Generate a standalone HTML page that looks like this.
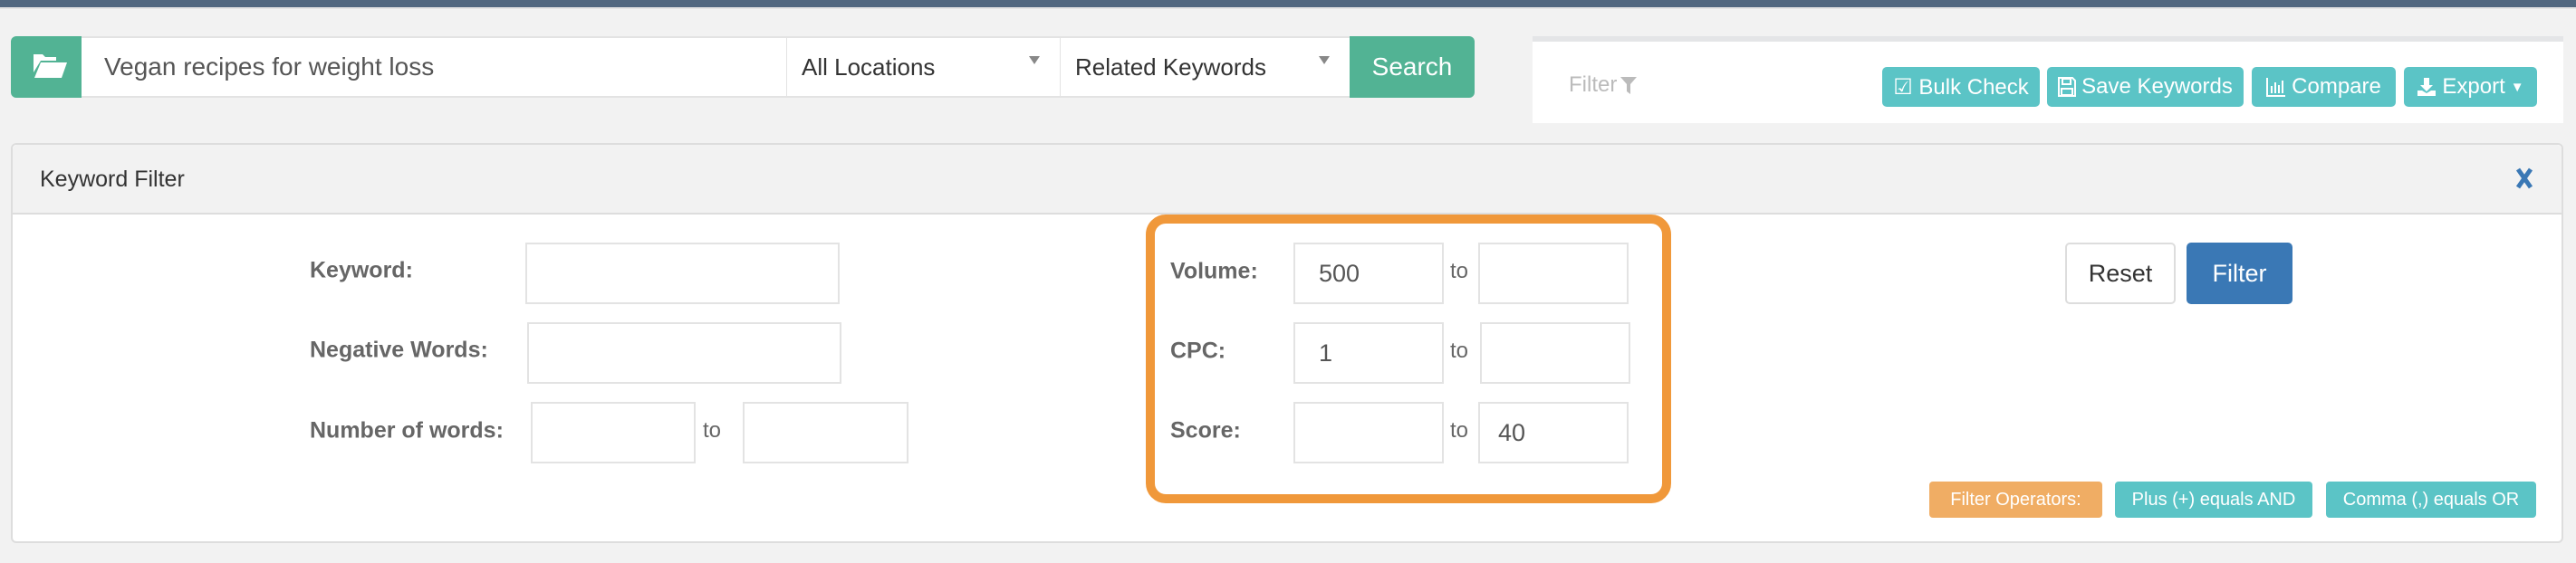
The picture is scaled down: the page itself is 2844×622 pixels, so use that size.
<!DOCTYPE html>
<html><head><meta charset="utf-8"><style>
*{box-sizing:border-box;margin:0;padding:0}
body{width:2844px;height:622px;background:#f2f2f2;font-family:"Liberation Sans",sans-serif;position:relative;overflow:hidden;color:#555}
.a{position:absolute}
.inp{position:absolute;background:#fff;border:2px solid #e3e3e3;font-size:27px;color:#555;padding-left:26px;display:flex;align-items:center}
.lbl{position:absolute;font-weight:bold;font-size:25px;color:#666;transform:translateY(-50%)}
.to{position:absolute;font-size:24px;color:#666;transform:translateY(-50%)}
.tb{position:absolute;top:74px;height:44px;background:#5bc4c6;color:#fff;border-radius:5px;font-size:24px;display:flex;align-items:center;justify-content:center;gap:6px}
.op{position:absolute;top:532px;height:40px;color:#fff;border-radius:4px;font-size:20px;display:flex;align-items:center;justify-content:center}
</style></head><body>
<div class="a" style="left:0;top:0;width:2844px;height:8px;background:#526880"></div>
<div class="a" style="left:0;top:8px;width:2844px;height:2px;background:#e4e4e4"></div>

<div class="a" style="left:12px;top:40px;width:80px;height:68px;background:#52b394;border-radius:6px 0 0 6px"></div>
<svg class="a" style="left:36px;top:58px" width="38" height="30" viewBox="0 0 38 30"><path d="M1 2h10l3 3h12v4H9L1 22z" fill="#fff"/><path d="M9 11h29l-6 17H2z" fill="#fff"/></svg>
<div class="inp" style="left:90px;top:40px;width:780px;height:68px;border-width:2px 0 2px 0;padding-left:25px;font-size:28px">Vegan recipes for weight loss</div>
<div class="inp" style="left:868px;top:40px;width:303px;height:68px;border-width:2px 1px 2px 1px;padding-left:16px;font-size:26px;color:#333">All Locations</div>
<div class="a" style="left:1136px;top:62px;border:6px solid transparent;border-top:9px solid #888;border-bottom:0"></div>
<div class="inp" style="left:1170px;top:40px;width:322px;height:68px;border-width:2px 0 2px 1px;padding-left:16px;font-size:26px;color:#333">Related Keywords</div>
<div class="a" style="left:1456px;top:62px;border:6px solid transparent;border-top:9px solid #888;border-bottom:0"></div>
<div class="a" style="left:1490px;top:40px;width:138px;height:68px;background:#52b394;border-radius:0 6px 6px 0;color:#fff;font-size:28px;display:flex;align-items:center;justify-content:center">Search</div>

<div class="a" style="left:1692px;top:40px;width:1138px;height:96px;background:#fff;border-top:6px solid #e4e5e7"></div>
<div class="a" style="left:1732px;top:80px;font-size:24px;color:#bbb;display:flex;align-items:center;gap:4px">Filter <svg width="18" height="22" viewBox="0 0 18 22"><path d="M0 2h18l-7 8v11l-4-3v-8z" fill="#bbb"/></svg></div>
<div class="tb" style="left:2078px;width:174px">&#9745; Bulk Check</div>
<div class="tb" style="left:2260px;width:217px"><svg width="20" height="22" viewBox="0 0 20 22"><path d="M1 1h15l3 3v17H1z" fill="none" stroke="#fff" stroke-width="2"/><path d="M5 2h9v6H5zM4 13h12v7H4z" fill="none" stroke="#fff" stroke-width="2"/></svg>Save Keywords</div>
<div class="tb" style="left:2486px;width:159px"><svg width="22" height="22" viewBox="0 0 22 22"><path d="M1 1v20h20" stroke="#fff" stroke-width="2" fill="none"/><path d="M5 10h2v8H5zM9 6h2v12H9zM13 9h2v9h-2zM17 4h2v14h-2z" fill="#fff"/></svg>Compare</div>
<div class="tb" style="left:2654px;width:147px"><svg width="22" height="22" viewBox="0 0 22 22"><path d="M8 1h6v8h4l-7 7-7-7h4z" fill="#fff"/><path d="M1 15h5l5 3 5-3h5v6H1z" fill="#fff"/></svg>Export <span style="font-size:15px">&#9660;</span></div>

<div class="a" style="left:12px;top:158px;width:2818px;height:442px;background:#fff;border:2px solid #ddd;border-radius:6px"></div>
<div class="a" style="left:14px;top:160px;width:2814px;height:77px;background:#f2f2f2;border-bottom:2px solid #ddd;border-radius:5px 5px 0 0"></div>
<div class="a" style="left:44px;top:184px;font-size:25px;color:#333">Keyword Filter</div>
<svg class="a" style="left:2777px;top:185px" width="20" height="24" viewBox="0 0 20 24"><path d="M3 2L17 22M17 2L3 22" stroke="#3a78b5" stroke-width="5"/></svg>

<div class="lbl" style="left:342px;top:299px">Keyword:</div>
<div class="inp" style="left:580px;top:268px;width:347px;height:68px"></div>
<div class="lbl" style="left:342px;top:387px">Negative Words:</div>
<div class="inp" style="left:582px;top:356px;width:347px;height:68px"></div>
<div class="lbl" style="left:342px;top:476px">Number of words:</div>
<div class="inp" style="left:586px;top:444px;width:182px;height:68px"></div>
<div class="to" style="left:776px;top:476px">to</div>
<div class="inp" style="left:820px;top:444px;width:183px;height:68px"></div>

<div class="a" style="left:1265px;top:237px;width:580px;height:319px;border:10px solid #f0983a;border-radius:22px"></div>
<div class="lbl" style="left:1292px;top:300px">Volume:</div>
<div class="inp" style="left:1428px;top:268px;width:166px;height:68px">500</div>
<div class="to" style="left:1601px;top:300px">to</div>
<div class="inp" style="left:1632px;top:268px;width:166px;height:68px"></div>
<div class="lbl" style="left:1292px;top:388px">CPC:</div>
<div class="inp" style="left:1428px;top:356px;width:166px;height:68px">1</div>
<div class="to" style="left:1601px;top:388px">to</div>
<div class="inp" style="left:1634px;top:356px;width:166px;height:68px"></div>
<div class="lbl" style="left:1292px;top:476px">Score:</div>
<div class="inp" style="left:1428px;top:444px;width:166px;height:68px"></div>
<div class="to" style="left:1601px;top:476px">to</div>
<div class="inp" style="left:1632px;top:444px;width:166px;height:68px;padding-left:20px">40</div>

<div class="a" style="left:2280px;top:268px;width:122px;height:68px;background:#fff;border:2px solid #ddd;border-radius:5px;font-size:27px;color:#333;display:flex;align-items:center;justify-content:center">Reset</div>
<div class="a" style="left:2414px;top:268px;width:117px;height:68px;background:#3a78b5;border-radius:5px;font-size:27px;color:#fff;display:flex;align-items:center;justify-content:center">Filter</div>

<div class="op" style="left:2130px;width:191px;background:#f0ad64">Filter Operators:</div>
<div class="op" style="left:2335px;width:218px;background:#5bc4c6">Plus (+) equals AND</div>
<div class="op" style="left:2568px;width:232px;background:#5bc4c6">Comma (,) equals OR</div>
</body></html>
